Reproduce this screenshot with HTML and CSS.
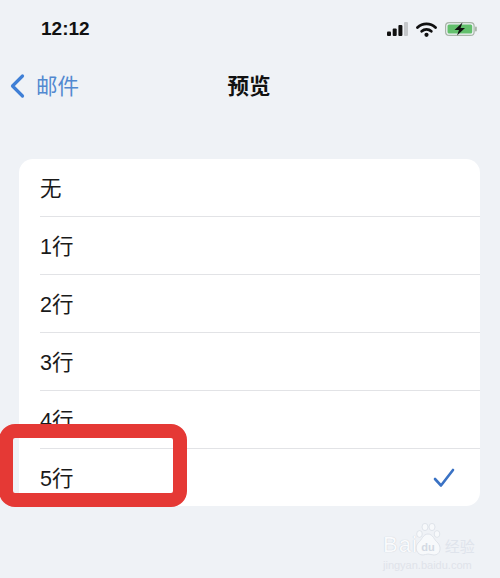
FILE: index.html
```html
<!DOCTYPE html>
<html lang="zh-CN">
<head>
    <meta charset="UTF-8">
    <meta name="viewport" content="width=device-width, initial-scale=1.0">
    <title>预览</title>
    <link rel="stylesheet" href="styles.css">
</head>
<body>

<div class="status-bar">
    <span class="time">12:12</span>
    <div class="status-icons">
        <svg class="signal" width="21" height="14" viewBox="0 0 21 14">
            <rect x="0" y="9.5" width="4" height="4.5" rx="1" fill="#111"/>
            <rect x="5.7" y="6.5" width="4" height="7.5" rx="1" fill="#111"/>
            <rect x="11.4" y="3" width="4" height="11" rx="1" fill="#111"/>
            <rect x="17" y="0" width="4" height="14" rx="1" fill="#c4c7ca"/>
        </svg>
        <svg class="wifi" width="21" height="15" viewBox="0 0 21 15">
            <path d="M1.5 5.5 A13 13 0 0 1 19.5 5.5" fill="none" stroke="#111" stroke-width="2.8" stroke-linecap="round"/>
            <path d="M5.7 9.3 A7 7 0 0 1 15.3 9.3" fill="none" stroke="#111" stroke-width="2.8" stroke-linecap="round"/>
            <circle cx="10.5" cy="12.8" r="2.1" fill="#111"/>
        </svg>
        <svg class="battery" width="32" height="14" viewBox="0 0 32 14">
            <rect x="0.6" y="0.6" width="28.5" height="12.8" rx="3.5" fill="none" stroke="#a8b5a8" stroke-width="1.2"/>
            <rect x="2.5" y="2.5" width="24.7" height="9" rx="1.5" fill="#63c06d"/>
            <rect x="30" y="4.5" width="1.8" height="5" rx="0.9" fill="#a8b5a8"/>
            <path d="M17.5 0.5 L9.5 8 H14 L12 13.5 L20 6 H15.5 Z" fill="#111"/>
        </svg>
    </div>
</div>

<nav class="nav-bar">
    <a class="back">
        <svg width="16" height="26" viewBox="0 0 16 26">
            <path d="M13.5 3 L3.5 13 L13.5 23" fill="none" stroke="#3f7fd6" stroke-width="3.2" stroke-linecap="round" stroke-linejoin="round"/>
        </svg>
        <span>邮件</span>
    </a>
    <h1>预览</h1>
</nav>

<ul class="option-list">
    <li class="option">无</li>
    <li class="option">1行</li>
    <li class="option">2行</li>
    <li class="option">3行</li>
    <li class="option">4行</li>
    <li class="option">5行
        <svg class="check" width="22" height="20" viewBox="0 0 22 20">
            <path d="M2 11 L8 17.5 L20 2" fill="none" stroke="#3a72c4" stroke-width="2.6" stroke-linecap="round" stroke-linejoin="round"/>
        </svg>
    </li>
</ul>

<div class="highlight"></div>

<div class="watermark">
    <div class="wm-row">
        <span class="wm-bai">Bai</span>
        <svg class="wm-paw" width="26" height="36" viewBox="0 0 26 36">
            <g fill="#f7f9fb" stroke="#d9dee6" stroke-width="0.8">
                <ellipse cx="4.5" cy="11" rx="2.8" ry="3.4"/>
                <ellipse cx="10" cy="4" rx="3" ry="3.6"/>
                <ellipse cx="17" cy="4" rx="3" ry="3.6"/>
                <ellipse cx="22" cy="11" rx="2.8" ry="3.4"/>
                <path d="M13 11 C8 11 7 17 3 20 C-1 25 2 32 8 32 C10 32 11 31 13 31 C15 31 17 32 19 32 C25 32 27 25 23 20 C19 17 18 11 13 11 Z"/>
            </g>
            <text x="13" y="28" text-anchor="middle" class="wm-du">du</text>
        </svg>
        <span class="wm-jy">经验</span>
    </div>
    <div class="wm-url">jingyan.baidu.com</div>
</div>

</body>
</html>
```

FILE: styles.css
```css
html, body {
    height: 100%;
}
body {
    margin: 0;
    width: 500px;
    height: 578px;
    overflow: hidden;
    position: relative;
    background-color: #eff2f6;
    color: #1a1a1a;
    font-family: "Liberation Sans", "Noto Sans CJK SC", sans-serif;
}
.status-bar {
    display: flex;
    align-items: center;
    justify-content: space-between;
    height: 58px;
    padding: 0 23px 0 41px;
}
.time {
    font-size: 19px;
    font-weight: bold;
    color: #111;
}
.status-icons {
    display: flex;
    align-items: center;
    gap: 8px;
}
.nav-bar {
    display: flex;
    align-items: center;
    justify-content: center;
    position: relative;
    height: 56px;
}
.nav-bar h1 {
    margin: 0 0 3px -2px;
    font-size: 21.5px;
    font-weight: bold;
    color: #111;
}
.back {
    position: absolute;
    left: 9px;
    top: 13px;
    display: flex;
    align-items: center;
    gap: 11px;
    font-size: 21.5px;
    color: #5289d0;
}
.back span {
    margin-top: -2px;
}
.option-list {
    list-style: none;
    margin: 45px 20px 0 19px;
    padding: 0;
    background-color: #fff;
    border-radius: 14px;
    height: 347px;
    overflow: hidden;
}
.option {
    display: flex;
    align-items: center;
    justify-content: space-between;
    height: 53px;
    margin-left: 21px;
    padding: 4px 25px 0 0;
    border-bottom: 1px solid #e2e3e6;
    font-size: 21.5px;
    line-height: 53px;
}
.option:last-child {
    border-bottom: 0;
}
.check {
    margin-top: -4px;
}
.highlight {
    position: absolute;
    left: -1px;
    top: 424px;
    width: 160px;
    height: 55px;
    border: 14px solid #e53935;
    border-radius: 16px;
}
.watermark {
    position: absolute;
    left: 383px;
    top: 523px;
    width: 92px;
    color: #f9fafc;
}
.wm-row {
    display: flex;
    align-items: flex-end;
    height: 36px;
}
.wm-bai {
    font-size: 22px;
    line-height: 28px;
    letter-spacing: 1px;
    margin-right: -3px;
    text-shadow: 0 0 1px #b9c1cd;
}
.wm-paw {
    flex: none;
}
.wm-du {
    font-size: 11px;
    font-weight: bold;
    fill: #d3d9e3;
}
.wm-jy {
    font-size: 15px;
    line-height: 24px;
    margin-left: 4px;
    color: #dfe4ec;
}
.wm-url {
    font-size: 11px;
    line-height: 12px;
    color: #dfe3ea;
    white-space: nowrap;
}
```
